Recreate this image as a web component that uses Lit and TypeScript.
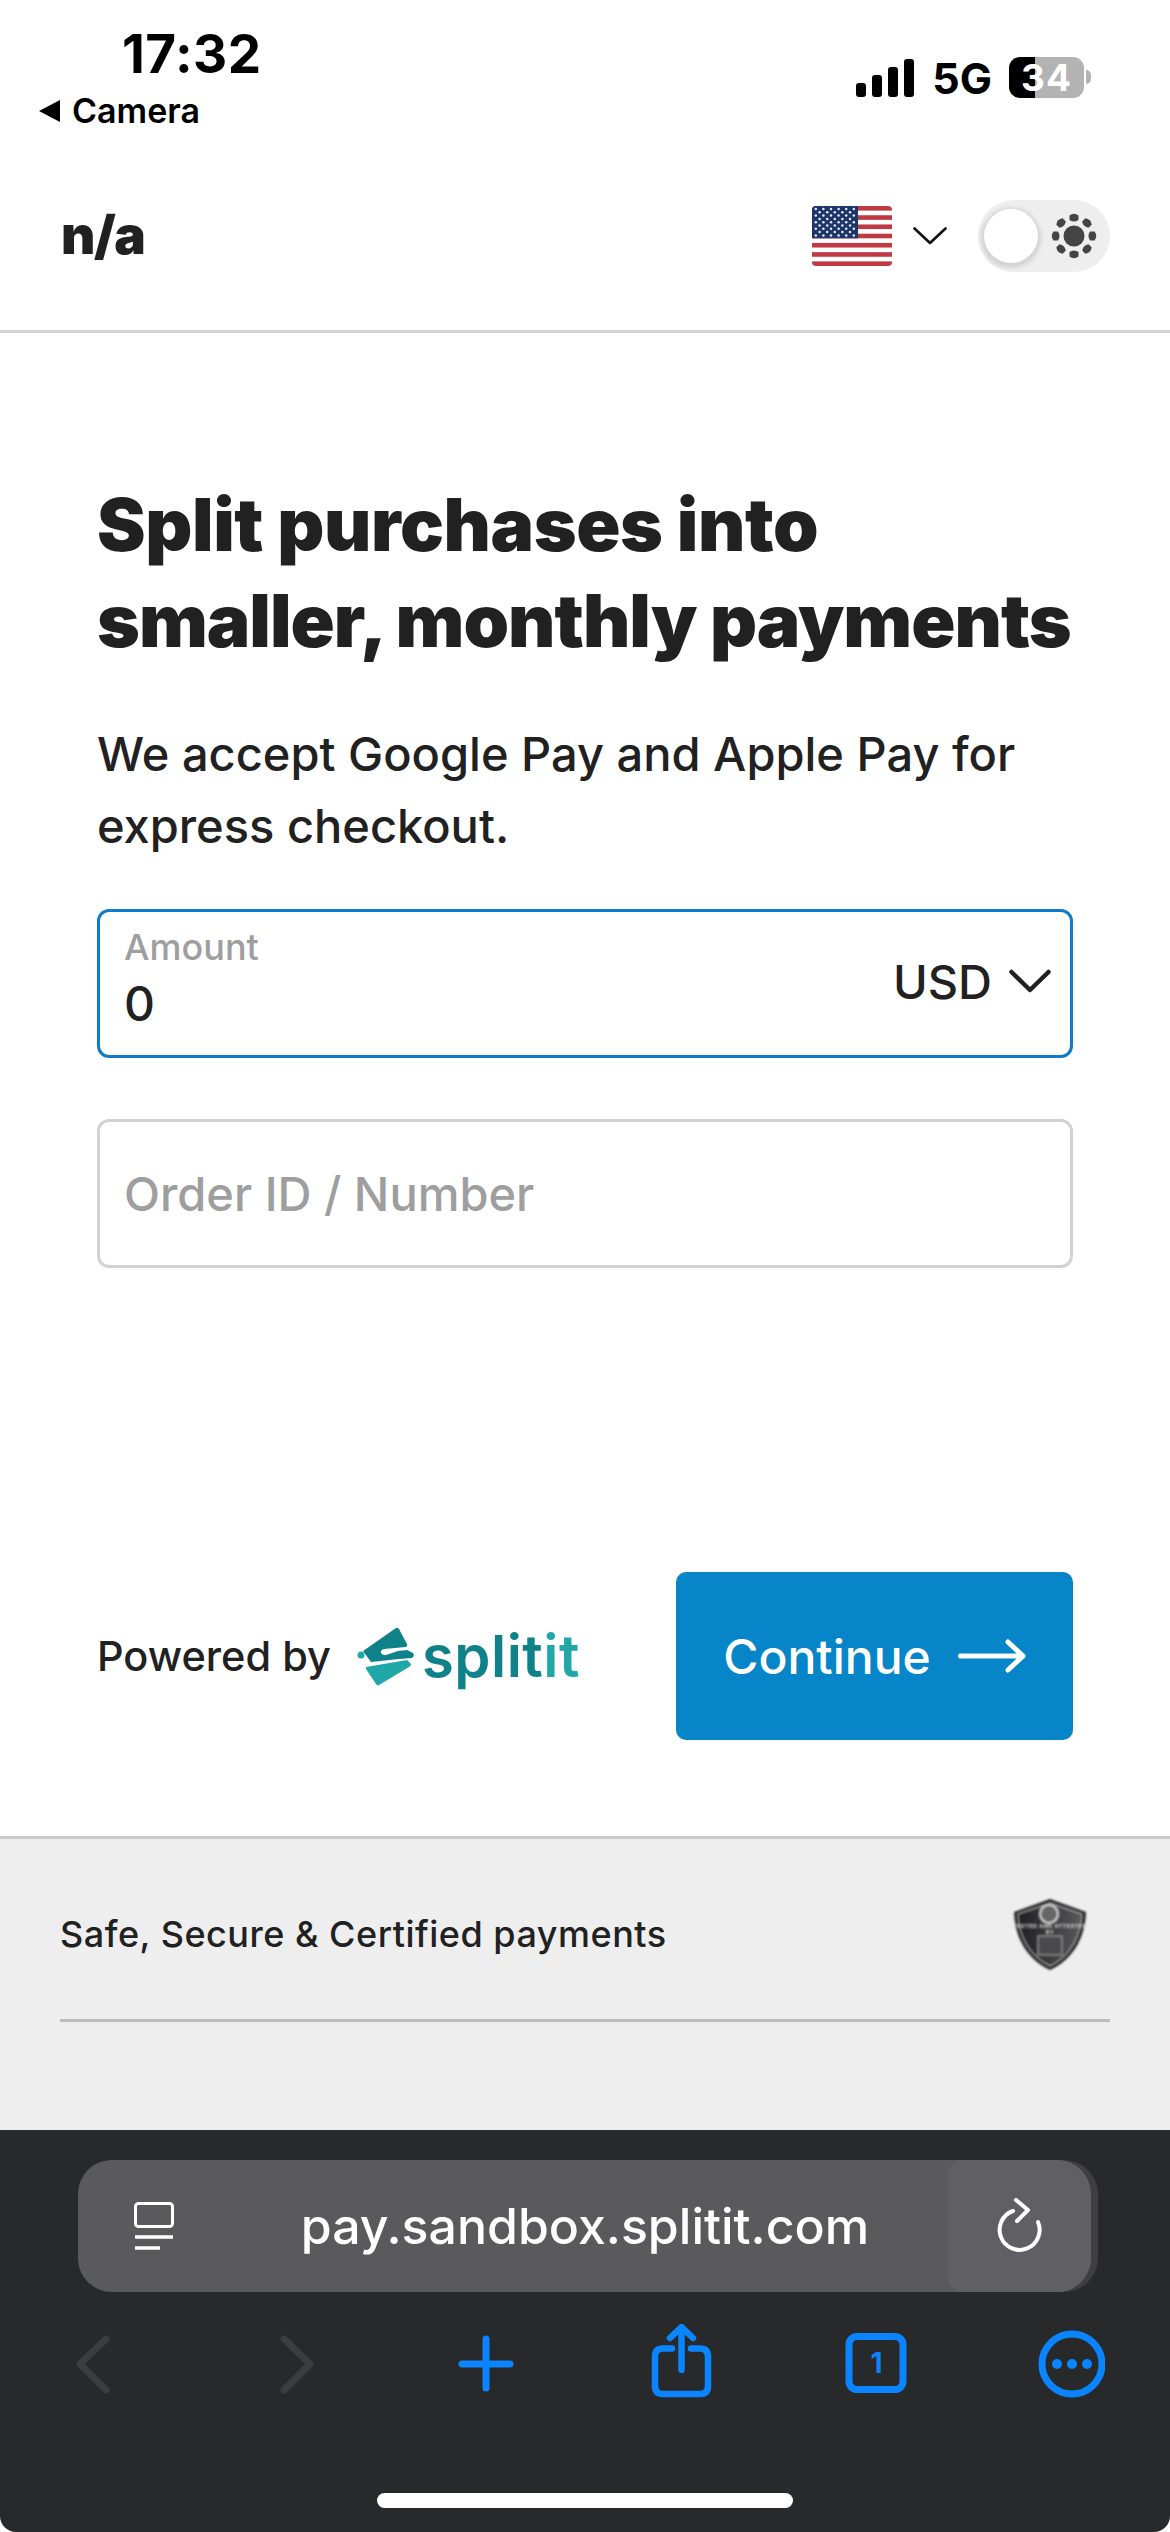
import { LitElement, html, css, svg } from "lit";
import { customElement } from "lit/decorators.js";

const stars = () => {
  const out = [];
  for (let r = 0; r < 9; r++) {
    const odd = r % 2 === 1;
    const n = odd ? 5 : 6;
    for (let c = 0; c < n; c++) {
      const x = (odd ? 7.6 : 3.8) + c * 7.6;
      const y = 3 + r * 3.3;
      out.push(svg`<circle cx=${x} cy=${y} r="1.25" fill="#e8ebf3"></circle>`);
    }
  }
  return out;
};

@customElement("app-root")
export class AppRoot extends LitElement {
  static styles = css`
    :host {
      display: flex;
      flex-direction: column;
      width: 1170px;
      height: 2532px;
      overflow: hidden;
      background: #fff;
      color: #212121;
      font-family: Inter, "Liberation Sans", sans-serif;
    }
    svg { display: block; flex: none; }
    .top { flex: none; height: 330px; border-bottom: 3px solid #d4d4d4; display: flex; flex-direction: column; }
    .status { height: 142px; flex: none; display: flex; justify-content: space-between; padding: 0 79px 0 38px; color: #000; }
    .status-left { display: flex; flex-direction: column; }
    .time { font-size: 53px; line-height: 52px; font-weight: 700; margin: 28px 0 0 84px; letter-spacing: 0.5px; }
    .back { display: flex; align-items: center; gap: 11px; font-size: 34px; line-height: 40px; font-weight: 600; margin-top: 11px; }
    .status-right { display: flex; align-items: flex-start; padding-top: 57px; }
    .net { font-size: 43px; line-height: 42px; font-weight: 700; margin: 0 17px 0 18px; }
    .battery { position: relative; width: 75px; height: 41px; border-radius: 11px; background: linear-gradient(90deg, #000 0 26px, #b3b3b3 26px); color: #fff; font-size: 37px; line-height: 41px; font-weight: 700; text-align: center; margin-right: 7px; letter-spacing: 1px; }
    .battery::after { content: ""; position: absolute; right: -7px; top: 13px; width: 5px; height: 14px; background: #b3b3b3; border-radius: 0 7px 7px 0; }
    .nav { flex: 1; display: flex; align-items: center; justify-content: space-between; padding: 0 60px 0 61px; }
    .brand { font-size: 53px; font-weight: 900; line-height: 60px; letter-spacing: -1.5px; margin-top: -3px; }
    .nav-right { display: flex; align-items: center; }
    .flag { border-radius: 4px; overflow: hidden; }
    .flag-chev { margin: 0 31px 0 21px; }
    .toggle { width: 132px; height: 72px; border-radius: 36px; background: #eee; padding: 9px 0 9px 6px; box-sizing: border-box; display: flex; align-items: center; gap: 13px; }
    .knob { width: 54px; height: 54px; border-radius: 50%; background: #fff; box-shadow: 0 2px 4px 3px #d2d2d2; flex: none; }
    main { flex: 1; padding: 144px 97px 0; display: flex; flex-direction: column; }
    h1 { margin: 0; font-size: 73px; line-height: 96px; font-weight: 900; letter-spacing: -1px; white-space: nowrap; }
    .line-one { letter-spacing: -0.4px; }
    .lead { margin: 49px 0 0; font-size: 47px; line-height: 72px; font-weight: 500; }
    .field { box-sizing: border-box; width: 976px; height: 149px; border: 3px solid #d2d2d2; border-radius: 12px; padding: 0 24px; display: flex; align-items: center; justify-content: space-between; }
    .amount { border-color: #0f7bcb; margin-top: 47px; }
    .order { margin-top: 61px; font-size: 47px; font-weight: 500; color: #9e9e9e; }
    .amount-text { display: flex; flex-direction: column; margin-top: -11px; }
    .label { font-size: 36px; line-height: 42px; color: #9e9e9e; font-weight: 500; }
    .value { font-size: 48px; line-height: 54px; font-weight: 500; margin-top: 9px; }
    .currency { display: flex; align-items: center; gap: 17px; font-size: 47px; font-weight: 500; margin-right: -5px; margin-top: -5px; }
    .actions { margin-top: 304px; display: flex; align-items: center; justify-content: space-between; }
    .powered { display: flex; align-items: center; }
    .powered-text { font-size: 41.5px; font-weight: 500; }
    .logo { display: flex; align-items: center; margin-left: 26px; }
    .word { font-size: 58px; line-height: 64px; font-weight: 600; color: #0f8289; margin-left: 5px; letter-spacing: 0.5px; }
    .word span { color: #20a8a8; }
    .continue { width: 397px; height: 168px; border: 0; border-radius: 10px; background: #0685c9; color: #fff; display: flex; align-items: center; justify-content: center; gap: 27px; font: 500 48px Inter, "Liberation Sans", sans-serif; padding: 0; }
    footer { flex: none; height: 294px; box-sizing: border-box; border-top: 3px solid #c9c9c9; background: #eee; padding: 0 60px; }
    .safe { height: 180px; border-bottom: 3px solid #bbb; display: flex; align-items: center; justify-content: space-between; font-size: 36px; letter-spacing: 0.5px; font-weight: 500; }
    .safe-text { padding-top: 10px; }
    .badge { margin: 12px 24px 0 0; filter: blur(0.9px); }
    .browser { flex: none; height: 402px; background: #28292b; border-radius: 0 0 16px 16px; display: flex; flex-direction: column; }
    .url-wrap { margin: 30px 72px 0 78px; height: 132px; border-radius: 34px; background: #3f3f41; flex: none; }
    .url { box-sizing: border-box; width: 1013px; height: 132px; border-radius: 34px; background: #5a5a5c; display: flex; align-items: center; color: #fff; overflow: hidden; }
    .page-icon { margin-left: 56px; }
    .url-text { flex: 1; text-align: center; font-size: 50px; font-weight: 500; margin-left: 48px; white-space: nowrap; }
    .reload { width: 143px; height: 132px; background: #606064; border-radius: 14px 0 0 14px; display: flex; align-items: center; justify-content: center; flex: none; }
    .tools { display: flex; justify-content: space-between; padding: 32px 65px 0 59px; height: 80px; flex: none; }
    .tabs-num { font: 700 28px Inter, "Liberation Sans", sans-serif; fill: #0a84ff; }
    .home { width: 416px; height: 15px; border-radius: 8px; background: #fff; margin: 89px auto 0; flex: none; }
  `;

  render() {
    return html`
      <div class="top">
        <div class="status">
          <div class="status-left">
            <div class="time">17:32</div>
            <div class="back">
              <svg width="23" height="22" viewBox="0 0 23 22"><path d="M1 11 L22 0 V22 Z" fill="#000"></path></svg>
              <span>Camera</span>
            </div>
          </div>
          <div class="status-right">
            <svg width="58" height="38" viewBox="0 0 58 38" style="margin-top:2px">
              <rect x="0" y="24" width="10" height="14" rx="3"></rect>
              <rect x="16" y="16" width="10" height="22" rx="3"></rect>
              <rect x="32" y="8" width="10" height="30" rx="3"></rect>
              <rect x="48" y="0" width="10" height="38" rx="3"></rect>
            </svg>
            <div class="net">5G</div>
            <div class="battery">34</div>
          </div>
        </div>
        <div class="nav">
          <div class="brand">n/a</div>
          <div class="nav-right">
            <svg class="flag" width="80" height="60" viewBox="0 0 80 60">
              <rect width="80" height="60" fill="#fff"></rect>
              ${[0, 2, 4, 6, 8, 10, 12].map((i) => svg`<rect y=${i * 4.615} width="80" height="4.615" fill="#c03a43"></rect>`)}
              <rect width="46" height="32.3" fill="#1e3569"></rect>
              ${stars()}
            </svg>
            <svg class="flag-chev" width="34" height="18" viewBox="0 0 34 18"><path d="M1.5 1.5 L17 16 L32.5 1.5" fill="none" stroke="#111" stroke-width="2.6" stroke-linecap="round" stroke-linejoin="round"></path></svg>
            <div class="toggle">
              <div class="knob"></div>
              <svg width="46" height="46" viewBox="0 0 46 46" fill="#444">
                <circle cx="23" cy="23" r="10.5"></circle>
                ${[0, 45, 90, 135, 180, 225, 270, 315].map((a) => svg`<path transform="rotate(${a} 23 23)" d="M18.5 2.5 Q23 -1 27.5 2.5 V7 Q23 10 18.5 7 Z"></path>`)}
              </svg>
            </div>
          </div>
        </div>
      </div>
      <main>
        <h1><span class="line-one">Split purchases into</span><br />smaller, monthly payments</h1>
        <p class="lead">We accept Google Pay and Apple Pay for<br />express checkout.</p>
        <div class="field amount">
          <div class="amount-text">
            <span class="label">Amount</span>
            <span class="value">0</span>
          </div>
          <div class="currency">
            <span>USD</span>
            <svg width="42" height="24" viewBox="0 0 42 24"><path d="M2.5 3 L21 21 L39.5 3" fill="none" stroke="#212121" stroke-width="4.5" stroke-linecap="round" stroke-linejoin="round"></path></svg>
          </div>
        </div>
        <div class="field order">Order ID / Number</div>
        <div class="actions">
          <div class="powered">
            <span class="powered-text">Powered by</span>
            <div class="logo">
              <svg width="60" height="64" viewBox="0 0 60 64">
                <circle cx="4" cy="31" r="3.5" fill="#20a8a8"></circle>
                <path d="M6 27 L39 4 Q41 3 42 5 L50 20 Q51 22 49 23 L27 25 Q23 26 24 29 Q25 31 29 31 L41 27 L50 26 L56 29 Q58 32 55 34 L42 35 L14 38 Z" fill="#0f8289"></path>
                <path d="M9 43 L50 36 L54 40 Q54 42 52 43 L22 61 Q20 62 19 60 L9 45 Z" fill="#20a8a8"></path>
              </svg>
              <div class="word">split<span>it</span></div>
            </div>
          </div>
          <button class="continue">
            <span>Continue</span>
            <svg width="68" height="34" viewBox="0 0 68 34"><path d="M2.5 17 H65 M50 3 L65 17 L50 31" fill="none" stroke="#fff" stroke-width="5" stroke-linecap="round" stroke-linejoin="round"></path></svg>
          </button>
        </div>
      </main>
      <footer>
        <div class="safe">
          <span class="safe-text">Safe, Secure &amp; Certified payments</span>
          <svg class="badge" width="72" height="72" viewBox="0 0 72 72">
            <defs><linearGradient id="sh" x1="0" x2="1"><stop offset="0" stop-color="#1f1f21"></stop><stop offset="1" stop-color="#59595b"></stop></linearGradient></defs>
            <path d="M36 0 L72 13 C71 40 58 61 36 71 C14 61 1 40 0 13 Z" fill="#222"></path>
            <path d="M36 4 L68 15 C67 39 55 58 36 67 C17 58 5 39 4 15 Z" fill="url(#sh)" stroke="#a8a8a8" stroke-width="1.4"></path>
            <circle cx="35" cy="15" r="9" fill="#666" stroke="#ddd" stroke-width="2.2"></circle>
            <text x="36" y="29" text-anchor="middle" font-size="5.4" font-weight="700" fill="#ddd" font-family="Inter, sans-serif">TESTED AND ATTESTED</text>
            <text x="36" y="35" text-anchor="middle" font-size="5.4" font-weight="700" fill="#ddd" font-family="Inter, sans-serif">BY</text>
            <rect x="24" y="37" width="24" height="19" fill="#4a4a4c" stroke="#999" stroke-width="1.4"></rect>
          </svg>
        </div>
      </footer>
      <div class="browser">
        <div class="url-wrap">
          <div class="url">
            <svg class="page-icon" width="40" height="48" viewBox="0 0 40 48" fill="none" stroke="#fff" stroke-width="3">
              <rect x="1.5" y="1.5" width="37" height="23" rx="3"></rect>
              <path d="M1 35 H39 M1 46 H26" stroke-width="3.6"></path>
            </svg>
            <span class="url-text">pay.sandbox.splitit.com</span>
            <div class="reload">
              <svg width="46" height="56" viewBox="0 0 46 56" fill="none" stroke="#fff" stroke-width="4" stroke-linecap="round" stroke-linejoin="round">
                <path d="M16 13 A20 20 0 1 0 41 24"></path>
                <path d="M19 2 L31 12 L20 23"></path>
              </svg>
            </div>
          </div>
        </div>
        <div class="tools">
          <svg width="68" height="80" viewBox="0 0 68 80" fill="none" stroke="#3c3d3f" stroke-width="7" stroke-linecap="round" stroke-linejoin="round"><path d="M47 15 L21 40 L47 66"></path></svg>
          <svg width="68" height="80" viewBox="0 0 68 80" fill="none" stroke="#3c3d3f" stroke-width="7" stroke-linecap="round" stroke-linejoin="round"><path d="M29 15 L55 40 L29 66"></path></svg>
          <svg width="68" height="80" viewBox="0 0 68 80" fill="none" stroke="#0a84ff" stroke-width="7" stroke-linecap="round"><path d="M36 15 V64 M12 40 H60"></path></svg>
          <svg width="68" height="80" viewBox="0 0 68 80" fill="none" stroke="#0a84ff" stroke-width="6.5" stroke-linecap="round" stroke-linejoin="round">
            <path d="M26 24.5 H17 Q9 24.5 9 32.5 V62 Q9 70 17 70 H54 Q62 70 62 62 V32.5 Q62 24.5 54 24.5 H45"></path>
            <path d="M35.5 46 V4 M24 14 L35.5 3 L47 14"></path>
          </svg>
          <svg width="68" height="80" viewBox="0 0 68 80" fill="none">
            <rect x="8" y="12.5" width="54" height="53" rx="8" stroke="#0a84ff" stroke-width="7"></rect>
            <text class="tabs-num" x="35.5" y="49" text-anchor="middle">1</text>
          </svg>
          <svg width="68" height="80" viewBox="0 0 68 80" fill="none">
            <circle cx="35" cy="40" r="30" stroke="#0a84ff" stroke-width="7"></circle>
            <circle cx="20" cy="40" r="5" fill="#0a84ff"></circle>
            <circle cx="35" cy="40" r="5" fill="#0a84ff"></circle>
            <circle cx="50" cy="40" r="5" fill="#0a84ff"></circle>
          </svg>
        </div>
        <div class="home"></div>
      </div>
    `;
  }
}
